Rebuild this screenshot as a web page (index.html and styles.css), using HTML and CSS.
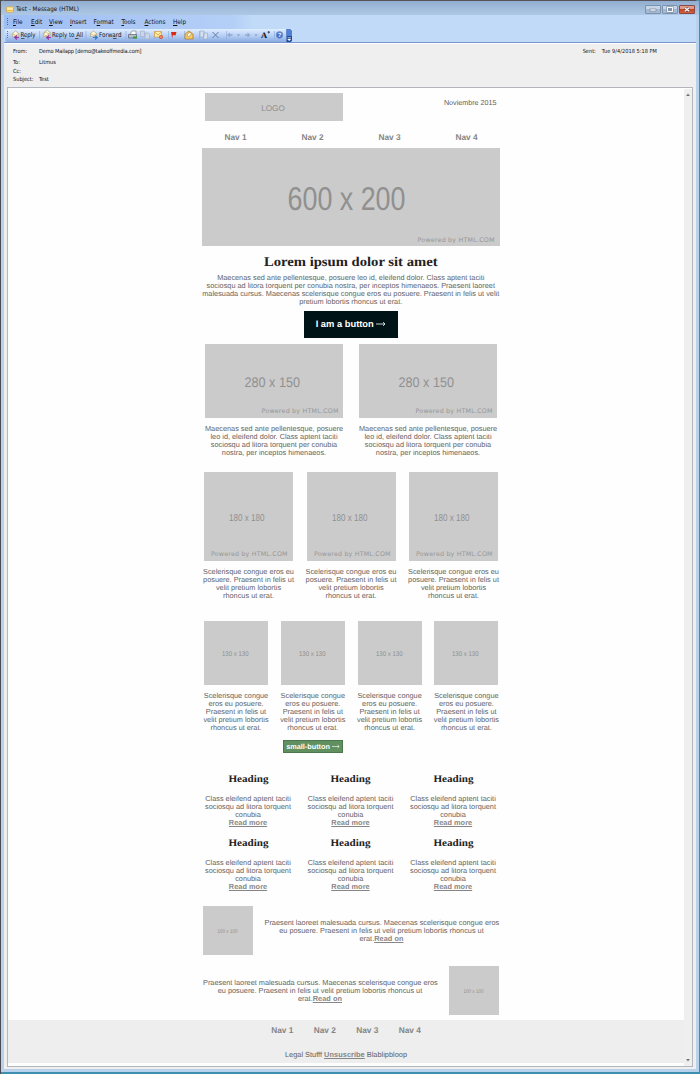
FILE: index.html
```
<!DOCTYPE html>
<html lang="en">
<head>
<meta charset="utf-8">
<title>Test - Message (HTML)</title>
<link rel="stylesheet" href="styles.css">
</head>
<body>
<svg width="0" height="0" class="defs">
  <symbol id="mail" viewBox="0 0 10 10"><path d="M1 4 4.500 1 8 4v3H1z" fill="#fff8d8" stroke="#a59a79" stroke-width=".7"/><path d="M1 4l3.500 2L8 4" fill="none" stroke="#b79b5b" stroke-width=".7"/></symbol>
</svg>
<div class="window">
  <header class="titlebar">
    <svg class="appicon" viewBox="0 0 8 7"><rect x=".5" y=".8" width="7" height="5.400" rx=".8" fill="#ffe9a0" stroke="#d09a35" stroke-width=".7"/><path d="M1 4.500h6" stroke="#f2b94c"/></svg>
    <span class="title">Test - Message (HTML)</span>
    <div class="controls">
      <span class="ctl"><svg viewBox="0 0 16 9"><rect x="5" y="4" width="6" height="2" fill="#fff" stroke="#66788e" stroke-width=".6"/></svg></span>
      <span class="ctl"><svg viewBox="0 0 16 9"><rect x="5.500" y="2.500" width="5" height="4" fill="#8294a9" stroke="#fff"/><rect x="4.800" y="1.800" width="6.400" height="5.400" fill="none" stroke="#66788e" stroke-width=".5"/></svg></span>
      <span class="ctl close"><svg viewBox="0 0 16 9"><path d="M5.800 2.700l4.400 3.600m0-3.600l-4.400 3.600" stroke="#6c3b38" stroke-width="2.400"/><path d="M5.800 2.700l4.400 3.600m0-3.600l-4.400 3.600" stroke="#fff" stroke-width="1.300"/></svg></span>
    </div>
  </header>
  <nav class="menubar"><i class="grip"></i>
    <span class="m1"><u>F</u>ile</span><span class="m2"><u>E</u>dit</span><span class="m3"><u>V</u>iew</span><span class="m4"><u>I</u>nsert</span><span class="m5">F<u>o</u>rmat</span><span class="m6"><u>T</u>ools</span><span class="m7"><u>A</u>ctions</span><span class="m8"><u>H</u>elp</span>
  </nav>
  <div class="toolbar">
    <svg class="tools" viewBox="0 0 290 13">
      <g fill="#5278b8"><rect x="2" y="2" width="1" height="1"/><rect x="2" y="4" width="1" height="1"/><rect x="2" y="6" width="1" height="1"/><rect x="2" y="8" width="1" height="1"/></g>
      <use href="#mail" x="6" y="1" width="10" height="9"/><path d="M14 8.500h-4m2-2-2.300 2 2.300 2" fill="none" stroke="#9b35a1" stroke-width="1.200"/>
      <text x="15.500" y="8.300" textLength="15" lengthAdjust="spacingAndGlyphs">Reply</text>
      <use href="#mail" x="38" y="0" width="9" height="9"/><use href="#mail" x="37" y="2" width="9" height="8"/><path d="M46 8.500h-4m2-2-2.300 2 2.300 2" fill="none" stroke="#9b35a1" stroke-width="1.200"/>
      <text x="47" y="8.300" textLength="31" lengthAdjust="spacingAndGlyphs">Reply to All</text>
      <use href="#mail" x="84" y="1" width="10" height="9"/><path d="M88 8.500h4m-2-2 2.300 2-2.300 2" fill="none" stroke="#3978cf" stroke-width="1.200"/>
      <text x="94" y="8.300" textLength="22.500" lengthAdjust="spacingAndGlyphs">Forward</text>
      <path d="M16 9.500h3.500M70 9.500h3.500M108 9.500h3.500" stroke="#111" stroke-width=".6"/>
      <path d="M34.500 2v8M81 2v8M121 2v8M149.500 2v8M163.500 2v8M179.500 2v8M194.500 2v8M221.500 2v8M269.500 2v8" stroke="#8aa6d8" stroke-width=".6"/>
      <g><path d="M125 5.500 127 2h4v4" fill="#fff" stroke="#777" stroke-width=".6"/><path d="M123.500 5.500h8v3.500h-8z" fill="#b8bec8" stroke="#546071" stroke-width=".7"/><path d="M128 7.500h4v2h-4z" fill="#3d9c38"/></g>
      <g fill="#cad5e7" stroke="#a3b3cc" stroke-width=".7"><path d="M135.500 2h4v5.500h-4zM140 4h3l1.500 1.500V10H140z"/></g>
      <path d="M149.500 2.500h7v5.500h-7z" fill="#fff1a6" stroke="#d29942" stroke-width=".7"/><path d="M149.500 3l3.500 3 3.500-3" fill="none" stroke="#cf8d2c" stroke-width=".7"/><circle cx="156" cy="8" r="2" fill="#d85331"/><path d="M155 8h2" stroke="#fff" stroke-width=".6"/>
      <path d="M166 3h5.500l-1 3.500-2.700-.5-.6 3.500z" fill="#d72b18"/>
      <path d="M180 5l4-3 4 3v5h-8z" fill="#f5cb67" stroke="#b67619" stroke-width=".7"/><path d="M182 6l2.500-3 2 2-3 3z" fill="#fff6d8" stroke="#8b7041" stroke-width=".5"/>
      <g fill="#d5e0f0" stroke="#9badc8" stroke-width=".7"><path d="M195 2h4v6h-4zM198.500 4h4v6h-4z"/></g>
      <path d="M207.500 3l6 6m0-6-6 6" stroke="#667da7" stroke-width="1"/>
      <path d="M222 6 225 3.500v1.700h2.500v1.600H225v1.700zM245.500 6l-3-2.500v1.700H240v1.600h2.500v1.700z" fill="#94a8cc"/><path d="M232 5.500h3L233.500 7zM249.500 5.500h3L251 7z" fill="#7b8fb5"/>
      <text x="256" y="9" class="serif">A</text><path d="M262.500 3.200h2.500M263.700 2v2.500" stroke="#234" stroke-width=".8"/>
      <circle cx="274.500" cy="6" r="3.400" fill="#4374c9" stroke="#7d9bd4" stroke-width=".7"/><text x="272.800" y="8.200" class="help">?</text>
      <path d="M281.500 0h3.500l2 2v11h-5.500z" fill="#1c4898"/><path d="M281.500 0h3.500l2 2v5h-5.500z" fill="#4f80d2"/><path d="M282.500 8.500h3.500M282.700 10h3l-1.500 1.800z" fill="#fff" stroke="#fff" stroke-width=".5"/>
    </svg>
  </div>
  <section class="headers">
    <dl><dt>From:</dt><dd class="from">Demo Mailapp [demo@takeoffmedia.com]</dd><dt>To:</dt><dd>Litmus</dd><dt>Cc:</dt><dd></dd><dt>Subject:</dt><dd>Test</dd></dl>
    <p class="sent"><span>Sent:</span><span class="when">Tue 9/4/2018 5:18 PM</span></p>
  </section>
  <main class="pane">
    <div class="page">
      <article class="mail">
        <div class="top"><div class="logo">LOGO</div><div class="date">Noviembre 2015</div></div>
        <nav class="nav"><b>Nav 1</b><b>Nav 2</b><b>Nav 3</b><b>Nav 4</b></nav>
        <svg class="ph hero"><text class="size" x="85.500" y="61.500" textLength="118" lengthAdjust="spacingAndGlyphs">600 x 200</text><text class="pow" x="215.500" y="93.500" textLength="77">Powered by HTML.COM</text></svg>
        <h1>Lorem ipsum dolor sit amet</h1>
        <p class="lead">Maecenas sed ante pellentesque, posuere leo id, eleifend dolor. Class aptent taciti<br>sociosqu ad litora torquent per conubia nostra, per inceptos himenaeos. Praesent laoreet<br>malesuada cursus. Maecenas scelerisque congue eros eu posuere. Praesent in felis ut velit<br>pretium lobortis rhoncus ut erat.</p>
        <div class="button">I am a button <svg class="arrow" viewBox="0 0 10 6"><path d="M0 3h9M7 1.200 9 3 7 4.800"/></svg></div>
        <section class="two">
          <div><svg class="ph"><text class="size" x="39.500" y="43" textLength="55.500" lengthAdjust="spacingAndGlyphs">280 x 150</text><text class="pow" x="56.500" y="69" textLength="77">Powered by HTML.COM</text></svg><p>Maecenas sed ante pellentesque, posuere<br>leo id, eleifend dolor. Class aptent taciti<br>sociosqu ad litora torquent per conubia<br>nostra, per inceptos himenaeos.</p></div>
          <div><svg class="ph"><text class="size" x="39.500" y="43" textLength="55.500" lengthAdjust="spacingAndGlyphs">280 x 150</text><text class="pow" x="56.500" y="69" textLength="77">Powered by HTML.COM</text></svg><p>Maecenas sed ante pellentesque, posuere<br>leo id, eleifend dolor. Class aptent taciti<br>sociosqu ad litora torquent per conubia<br>nostra, per inceptos himenaeos.</p></div>
        </section>
        <section class="three">
          <div><svg class="ph"><text class="size" x="25" y="48.500" textLength="35.500" lengthAdjust="spacingAndGlyphs">180 x 180</text><text class="pow" x="7" y="83.500" textLength="76.500">Powered by HTML.COM</text></svg><p>Scelerisque congue eros eu<br>posuere. Praesent in felis ut<br>velit pretium lobortis<br>rhoncus ut erat.</p></div>
          <div><svg class="ph"><text class="size" x="25" y="48.500" textLength="35.500" lengthAdjust="spacingAndGlyphs">180 x 180</text><text class="pow" x="7" y="83.500" textLength="76.500">Powered by HTML.COM</text></svg><p>Scelerisque congue eros eu<br>posuere. Praesent in felis ut<br>velit pretium lobortis<br>rhoncus ut erat.</p></div>
          <div><svg class="ph"><text class="size" x="25" y="48.500" textLength="35.500" lengthAdjust="spacingAndGlyphs">180 x 180</text><text class="pow" x="7" y="83.500" textLength="76.500">Powered by HTML.COM</text></svg><p>Scelerisque congue eros eu<br>posuere. Praesent in felis ut<br>velit pretium lobortis<br>rhoncus ut erat.</p></div>
        </section>
        <section class="four">
          <div><svg class="ph"><text class="size" x="18" y="35" textLength="26.500" lengthAdjust="spacingAndGlyphs">130 x 130</text></svg><p>Scelerisque congue<br>eros eu posuere.<br>Praesent in felis ut<br>velit pretium lobortis<br>rhoncus ut erat.</p></div>
          <div><svg class="ph"><text class="size" x="18" y="35" textLength="26.500" lengthAdjust="spacingAndGlyphs">130 x 130</text></svg><p>Scelerisque congue<br>eros eu posuere.<br>Praesent in felis ut<br>velit pretium lobortis<br>rhoncus ut erat.</p><span class="small-button">small-button <svg class="arrow" viewBox="0 0 10 6"><path d="M0 3h9M7 1.200 9 3 7 4.800"/></svg></span></div>
          <div><svg class="ph"><text class="size" x="18" y="35" textLength="26.500" lengthAdjust="spacingAndGlyphs">130 x 130</text></svg><p>Scelerisque congue<br>eros eu posuere.<br>Praesent in felis ut<br>velit pretium lobortis<br>rhoncus ut erat.</p></div>
          <div><svg class="ph"><text class="size" x="18" y="35" textLength="26.500" lengthAdjust="spacingAndGlyphs">130 x 130</text></svg><p>Scelerisque congue<br>eros eu posuere.<br>Praesent in felis ut<br>velit pretium lobortis<br>rhoncus ut erat.</p></div>
        </section>
        <section class="teasers">
          <div><h2>Heading</h2><p>Class eleifend aptent taciti<br>sociosqu ad litora torquent<br>conubia<br><a>Read more</a></p></div>
          <div><h2>Heading</h2><p>Class eleifend aptent taciti<br>sociosqu ad litora torquent<br>conubia<br><a>Read more</a></p></div>
          <div><h2>Heading</h2><p>Class eleifend aptent taciti<br>sociosqu ad litora torquent<br>conubia<br><a>Read more</a></p></div>
          <div><h2>Heading</h2><p>Class eleifend aptent taciti<br>sociosqu ad litora torquent<br>conubia<br><a>Read more</a></p></div>
          <div><h2>Heading</h2><p>Class eleifend aptent taciti<br>sociosqu ad litora torquent<br>conubia<br><a>Read more</a></p></div>
          <div><h2>Heading</h2><p>Class eleifend aptent taciti<br>sociosqu ad litora torquent<br>conubia<br><a>Read more</a></p></div>
        </section>
        <section class="media"><svg class="ph"><text class="size" x="14.500" y="27" textLength="20" lengthAdjust="spacingAndGlyphs">100 x 100</text></svg><p>Praesent laoreet malesuada cursus. Maecenas scelerisque congue eros<br>eu posuere. Praesent in felis ut velit pretium lobortis rhoncus ut<br>erat.<a>Read on</a></p></section>
        <section class="media second"><p>Praesent laoreet malesuada cursus. Maecenas scelerisque congue eros<br>eu posuere. Praesent in felis ut velit pretium lobortis rhoncus ut<br>erat.<a>Read on</a></p><svg class="ph"><text class="size" x="14.500" y="27" textLength="20" lengthAdjust="spacingAndGlyphs">100 x 100</text></svg></section>
      </article>
      <footer class="foot"><nav><b>Nav 1</b><b>Nav 2</b><b>Nav 3</b><b>Nav 4</b></nav><p>Legal Stufff <a>Unsuscribe</a> Blablipbloop</p></footer>
    </div>
    <div class="scroll"><svg viewBox="0 0 8 5"><path d="M2 4h4L4 1.500z"/></svg><svg viewBox="0 0 8 5"><path d="M2 1h4L4 3.500z"/></svg></div>
  </main>
</div>
</body>
</html>
```
FILE: styles.css
```
* { box-sizing: border-box; }
body { margin: 0; width: 700px; height: 1074px; overflow: hidden; background: linear-gradient(90deg, #4a4a50 50%, #3c91ae 50%); font-family: "Liberation Sans", Arial, sans-serif; text-rendering: geometricPrecision; }
h1, h2, p, dl, dd { margin: 0; }
svg { display: block; }
.defs { height: 0; width: 0; float: left; }
.window { display: flex; flex-direction: column; width: 698px; height: 1072px; margin-left: 1px; border: solid #bad1eb; border-width: 0 3px 3px; border-top: 1px solid #575358; border-radius: 4px 4px 0 0; background: #efefef; box-shadow: 0 2px #3f8ead; }
.titlebar { display: flex; align-items: center; flex: none; height: 14px; margin: 0 -3px; padding: 3px 4px 0 5px; background: linear-gradient(#91aed0, #a1bbda 50%, #adc8e5); font: 6.250px "DejaVu Sans Condensed", sans-serif; color: #111; }
.appicon { width: 8px; height: 7px; }
.title { margin-left: 2px; }
.controls { display: flex; gap: 1px; margin-left: auto; }
.ctl { width: 16px; height: 9px; border: 1px solid #7c91ab; border-radius: 1px; background: linear-gradient(#c6d6e8 50%, #a4bad4 50%); }
.ctl svg { width: 16px; height: 9px; margin: -1px; }
.close { border-color: #884a48; background: linear-gradient(#df9a89 45%, #c33d22 45%, #d5603c); }
.menubar { display: flex; align-items: center; flex: none; height: 14px; padding: 0 0 0 3px; background: linear-gradient(90deg, #9ebdf3, #b4cff7 33%, #c0daf8 36%); font: 6.400px "DejaVu Sans Condensed", sans-serif; color: #111; }
.grip { width: 1px; height: 8px; background: repeating-linear-gradient(#486ca8 0 1px, transparent 1px 2px); }
.menubar u { text-decoration-thickness: .5px; text-underline-offset: 1px; }
.m1 { width: 18px; margin-left: 5px; }
.m2 { width: 18px; }
.m3 { width: 21px; }
.m4 { width: 23.500px; }
.m5 { width: 28px; }
.m6 { width: 23px; }
.m7 { width: 28.500px; }
.toolbar { flex: none; height: 14px; background: #c0daf8; border-bottom: 1px solid #7795cc; box-shadow: 0 1px #fff; }
.tools { width: 290px; height: 13px; margin-left: 1px; background: linear-gradient(#e0edff, #b8d0f6 50%, #88abdf); clip-path: inset(0 3px 0 0 round 2px); }
.tools text { font: 6.600px "DejaVu Sans Condensed", sans-serif; fill: #111; }
.tools .serif { font: bold 8.500px "Liberation Serif", serif; }
.tools .help { font: bold 6px "Liberation Sans", sans-serif; fill: #fff; }
.headers { display: flex; justify-content: space-between; flex: none; height: 43.500px; padding: 4px 39px 0 9px; font: 5.600px/8px "DejaVu Sans Condensed", sans-serif; color: #111; }
.headers dl { display: grid; grid-template-columns: 26px auto; grid-template-rows: 11px 8.500px 8px 8px; margin-top: 1px; }
.from { letter-spacing: -.12px; }
.sent { margin-top: 1px; }
.when { margin-left: 6px; letter-spacing: .03px; }
.pane { display: flex; width: 686px; height: 980px; margin-left: 3px; border: 1px solid #b4b6bd; background: #fefefe; }
.page { width: 676px; height: 976px; }
.scroll { display: flex; flex-direction: column; justify-content: space-between; width: 8px; margin-top: 1px; background: #efefef; padding: 3px 0; }
.scroll svg { width: 8px; height: 5px; fill: #777; }
.mail { display: flow-root; width: 297.500px; height: 932px; margin-left: 194px; text-align: center; }
.mail p { font-size: 7.330px; line-height: 8.130px; color: #646464; white-space: nowrap; }
.mail .lead { padding-top: .8px; }
.ph { background: #cbcbcb; }
.size { fill: #909090; }
.pow { font: 6.300px "DejaVu Sans", sans-serif; fill: #969696; }
.hero .size { font-size: 33px; }
.two .size { font-size: 14px; }
.three .size { font-size: 10px; }
.four .size { font-size: 6.800px; }
.media .size { font-size: 5.300px; }
.top { display: flex; justify-content: space-between; height: 39.500px; padding: 5.500px 3px 0; }
.logo { width: 138px; height: 27.500px; background: #cbcbcb; color: #909090; font-size: 8.200px; line-height: 31px; padding-right: 2px; }
.date { font-size: 7.180px; line-height: 8px; color: #606060; margin-top: 6px; }
.nav { display: grid; grid-template-columns: repeat(4, 77px); height: 20.500px; margin-left: -5px; font-size: 8.300px; line-height: 21.500px; color: #858585; }
.hero { width: 297.500px; height: 98.500px; }
h1 { height: 27px; font: bold 13.500px/31px "Liberation Serif", Georgia, serif; transform: scaleX(1.085); color: #222; white-space: nowrap; }
.button { width: 94px; height: 27px; margin: 4.700px auto 6px 102px; background: #001317; color: #fff; font-weight: bold; font-size: 9.350px; line-height: 27.500px; white-space: nowrap; }
.arrow { display: inline-block; width: 10px; height: 6px; fill: none; stroke: #fff; stroke-width: .8; }
.two { display: grid; grid-template-columns: 138px 138px; gap: 16px; height: 128.500px; margin-left: 3px; }
.two .ph { width: 138px; height: 74px; margin-bottom: 7px; }
.three { display: grid; grid-template-columns: repeat(3, 89px); gap: 13.500px; height: 148.500px; margin-left: 2px; }
.three .ph { width: 89px; height: 89px; margin-bottom: 6.500px; }
.three p, .four p { margin-left: -10px; margin-right: -10px; }
.four { display: grid; grid-template-columns: repeat(4, 64px); gap: 12.800px; height: 147px; margin-left: 2px; }
.four .ph { width: 64px; height: 64px; margin-bottom: 7px; }
.small-button { display: block; width: 60.500px; height: 12.500px; margin: 7.700px 0 0 2px; background: #609060; border: .5px solid #4d784e; color: #fff; font-weight: bold; font-size: 7.300px; line-height: 11px; white-space: nowrap; }
.small-button .arrow { width: 8px; height: 5px; }
.teasers { display: grid; grid-template-columns: repeat(3, 89px); grid-auto-rows: 64px; column-gap: 13.500px; height: 138px; margin-left: 1.500px; }
.teasers h2 { height: 26.800px; font: bold 10px/23.500px "Liberation Serif", Georgia, serif; transform: scaleX(1.11); color: #222; }
.mail a, .foot a { color: #868686; font-weight: bold; text-decoration: underline; text-decoration-thickness: .5px; letter-spacing: .05px; }
.media { display: flex; gap: 12px; height: 59.500px; margin-left: 1px; }
.media .ph { flex: none; width: 49.500px; height: 49.500px; }
.media p { width: 234px; margin-top: 13px; }
.second { padding-top: .5px; }
.foot { height: 43.500px; background: #eee; color: #606060; text-align: center; }
.foot nav { display: grid; grid-template-columns: repeat(4, 42.500px); justify-content: center; height: 30px; font-size: 8.300px; line-height: 20.500px; color: #858585; }
.foot p { font-size: 7.380px; line-height: 9px; }
```
